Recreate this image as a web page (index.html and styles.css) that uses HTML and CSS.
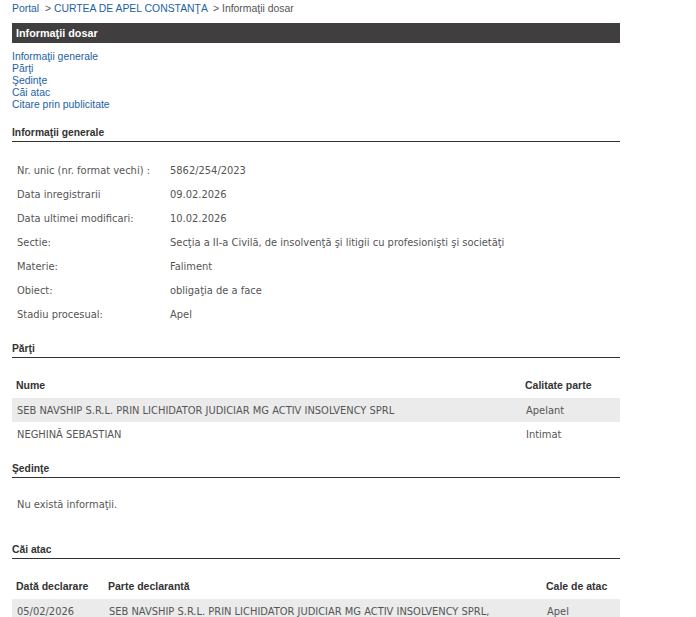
FILE: index.html
```html
<!DOCTYPE html>
<html lang="ro">

<head>
  <meta charset="UTF-8" />
  <title>Portal - Informaţii dosar</title>
  <link rel="stylesheet" href="styles.css">
</head>

<body>
  <div class="page">
    <div class="breadcrumb">
      <a href="#">Portal</a> &nbsp;&gt; <a href="#">CURTEA DE APEL CONSTANŢA</a> &nbsp;&gt; Informaţii dosar
    </div>

    <div class="title-bar">Informaţii dosar</div>

    <div class="nav-links">
      <a href="#generale">Informaţii generale</a>
      <a href="#parti">Părţi</a>
      <a href="#sedinte">Şedinţe</a>
      <a href="#cai">Căi atac</a>
      <a href="#citare">Citare prin publicitate</a>
    </div>

    <h4 class="section-title" id="generale">Informaţii generale</h4>
    <table class="info-table">
      <tr><td class="label">Nr. unic (nr. format vechi) :</td><td>5862/254/2023</td></tr>
      <tr><td class="label">Data inregistrarii</td><td>09.02.2026</td></tr>
      <tr><td class="label">Data ultimei modificari:</td><td>10.02.2026</td></tr>
      <tr><td class="label">Sectie:</td><td>Secţia a II-a Civilă, de insolvenţă şi litigii cu profesionişti şi societăţi</td></tr>
      <tr><td class="label">Materie:</td><td>Faliment</td></tr>
      <tr><td class="label">Obiect:</td><td>obligaţia de a face</td></tr>
      <tr><td class="label">Stadiu procesual:</td><td>Apel</td></tr>
    </table>

    <h4 class="section-title" id="parti">Părţi</h4>
    <table class="data-table">
      <tr><th>Nume</th><th class="col-calitate">Calitate parte</th></tr>
      <tr class="odd"><td>SEB NAVSHIP S.R.L. PRIN LICHIDATOR JUDICIAR MG ACTIV INSOLVENCY SPRL</td><td>Apelant</td></tr>
      <tr><td>NEGHINĂ SEBASTIAN</td><td>Intimat</td></tr>
    </table>

    <h4 class="section-title" id="sedinte">Şedinţe</h4>
    <p class="empty">Nu există informaţii.</p>

    <h4 class="section-title" id="cai">Căi atac</h4>
    <table class="data-table">
      <tr><th class="col-data">Dată declarare</th><th>Parte declarantă</th><th class="col-cale">Cale de atac</th></tr>
      <tr class="odd"><td>05/02/2026</td><td>SEB NAVSHIP S.R.L. PRIN LICHIDATOR JUDICIAR MG ACTIV INSOLVENCY SPRL,</td><td>Apel</td></tr>
    </table>
  </div>
</body>

</html>
```

FILE: styles.css
```css
body {
  margin: 0;
  background: #fff;
  font-family: Arial, "Liberation Sans", sans-serif;
  font-size: 10.4px;
  color: #555;
}

a {
  color: #1d62a4;
  text-decoration: none;
}

.page {
  width: 608px;
  padding: 0 0 0 12px;
}

.breadcrumb {
  padding-top: 2px;
  height: 14px;
  line-height: 14px;
  color: #555;
}

.title-bar {
  margin-top: 7px;
  height: 20px;
  line-height: 20px;
  padding-left: 4px;
  background: #403e3f;
  color: #fff;
  font-size: 10.8px;
  font-weight: bold;
}

.nav-links {
  margin-top: 8px;
}

.nav-links a {
  display: block;
  line-height: 12px;
}

.section-title {
  margin: 14px 0 0;
  padding: 2px 0 1px;
  border-bottom: 1px solid #333;
  font-size: 10.3px;
  line-height: 14px;
  color: #333;
}

.nav-links + .section-title {
  margin-top: 13px;
}

.info-table,
.data-table {
  width: 100%;
  border-collapse: collapse;
  font-family: Tahoma, "DejaVu Sans Condensed", sans-serif;
  font-size: 11px;
  color: #555;
}

.info-table {
  margin-top: 16px;
}

.info-table td {
  height: 24px;
  padding: 0 0 0 5px;
}

.info-table td.label {
  width: 148px;
}

.data-table {
  margin-top: 14px;
}

.data-table th {
  text-align: left;
  white-space: nowrap;
  font-family: Arial, "Liberation Sans", sans-serif;
  font-size: 10.5px;
  color: #333;
  height: 26px;
  padding: 0 0 0 4px;
}

.data-table td {
  height: 24px;
  padding: 0 0 0 5px;
}

.data-table tr.odd td {
  background: #ebebeb;
}

.data-table .col-calitate {
  width: 95px;
}

.data-table .col-data {
  width: 88px;
}

.data-table .col-cale {
  width: 74px;
}

.empty {
  margin: 20px 0 29px;
  padding-left: 5px;
  font-family: Tahoma, "DejaVu Sans Condensed", sans-serif;
  font-size: 11px;
  line-height: 14px;
}
```
